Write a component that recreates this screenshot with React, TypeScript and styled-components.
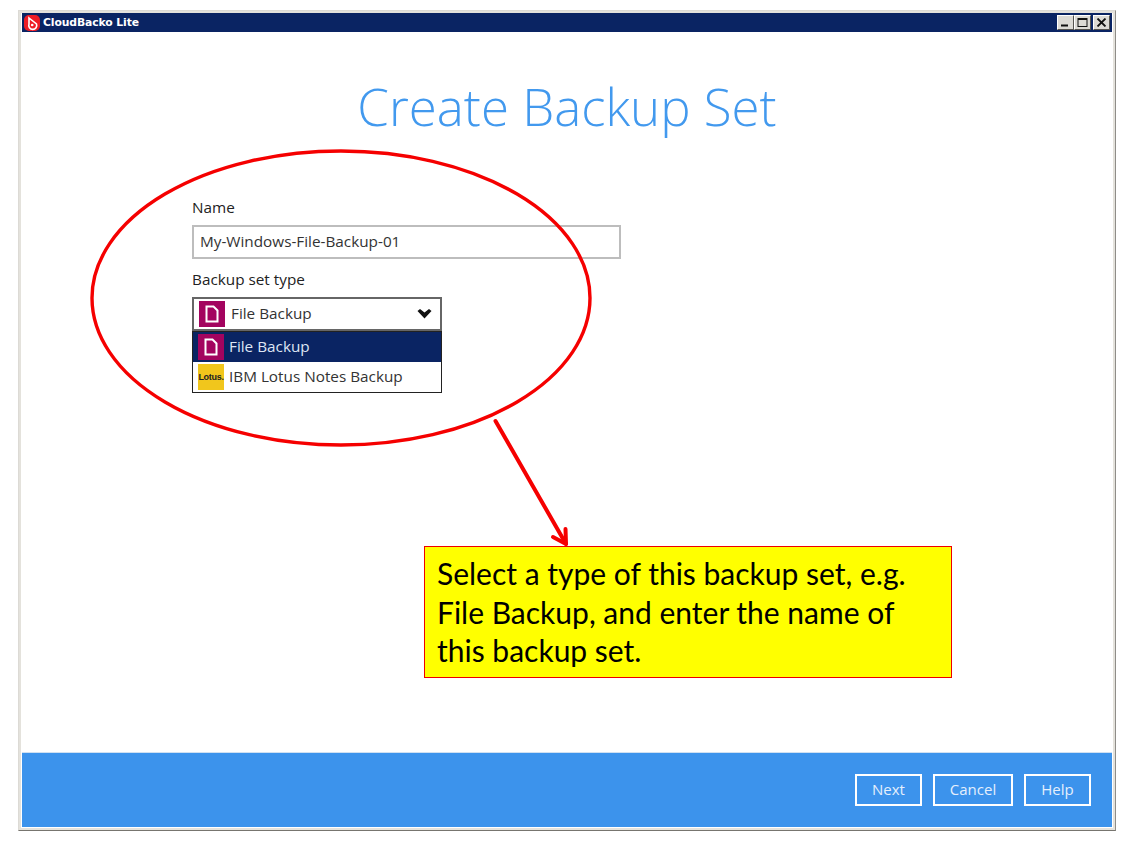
import React from "react";
import styled, { createGlobalStyle } from "styled-components";

const Global = createGlobalStyle`
  html, body { margin: 0; padding: 0; background: #fff; }
  body { font-family: "Open Sans", "Liberation Sans", sans-serif; }
`;

const Page = styled.div`
  position: relative;
  width: 1128px;
  height: 843px;
  padding: 10px 12px 12px 18px;
  box-sizing: border-box;
  overflow: hidden;
`;

const Win = styled.div`
  width: 1098px;
  height: 821px;
  box-sizing: border-box;
  display: flex;
  flex-direction: column;
  background: #fff;
  padding: 2px 3px 3px 3px;
  border: 1px solid;
  border-color: #dcdad5 #8f8d88 #77756f #dcdad5;
  box-shadow: inset 0 0 0 2px #e4e2dc;
`;

const TitleBar = styled.div`
  height: 19px;
  flex: none;
  background: #0a2463;
  display: flex;
  align-items: center;
  padding: 0 2px 0 2px;
  gap: 3px;
`;

const TitleText = styled.span`
  font-family: "DejaVu Sans", sans-serif;
  font-weight: 700;
  font-size: 10.8px;
  color: #fff;
  letter-spacing: -0.1px;
  flex: 1;
`;

const WinButton = styled.button<{ $gap?: boolean }>`
  width: 17px;
  height: 15px;
  padding: 0;
  margin: 0 0 0 ${(p) => (p.$gap ? 2 : 0)}px;
  background: #dcdad5;
  border: 1px solid;
  border-color: #fff #55534f #55534f #fff;
  display: flex;
  align-items: center;
  justify-content: center;
`;

const WinButtons = styled.div`
  display: flex;
`;

const Content = styled.main`
  flex: 1;
  display: flex;
  flex-direction: column;
  min-height: 0;
`;

const Heading = styled.h1`
  margin: 41px 0 0;
  text-align: center;
  font-weight: 300;
  font-size: 51px;
  line-height: 66px;
  color: #4299ee;
`;

const Form = styled.div`
  margin: 58px 0 0 170px;
  display: flex;
  flex-direction: column;
  align-items: flex-start;
`;

const NameLabel = styled.label`
  font-size: 15.3px;
  line-height: 19px;
  padding-top: 1px;
  margin-bottom: -1px;
  color: #222;
`;

const TypeLabel = styled.label`
  font-size: 15.3px;
  line-height: 19px;
  color: #222;
`;

const NameInput = styled.div`
  width: 429px;
  height: 34px;
  margin: 9px 0 11px;
  box-sizing: border-box;
  border: 2px solid #bdbdbd;
  padding: 0 6px;
  font-size: 15.3px;
  line-height: 29px;
  color: #333;
`;

const SelectWrap = styled.div`
  margin-top: 8px;
  width: 250px;
`;

const SelectBox = styled.div`
  height: 34px;
  box-sizing: border-box;
  border: 2px solid #666;
  padding: 0 8px 0 5px;
  display: flex;
  align-items: center;
  gap: 6px;
  font-size: 15.3px;
  color: #333;
`;

const ItemText = styled.span`
  padding-bottom: 3px;
`;

const Chevron = styled.svg`
  margin-left: auto;
  flex: none;
`;

const Dropdown = styled.div`
  border: 1px solid #222;
  box-sizing: border-box;
  height: 62px;
`;

const Option = styled.div<{ $selected?: boolean }>`
  height: 30px;
  display: flex;
  align-items: center;
  gap: 5px;
  padding-left: 5px;
  font-size: 15.3px;
  background: ${(p) => (p.$selected ? "#0a2463" : "#fff")};
  color: ${(p) => (p.$selected ? "#dfe6f4" : "#333")};
`;

const TypeIcon = styled.span`
  width: 26px;
  height: 26px;
  flex: none;
  background: #a3045f;
  display: flex;
  align-items: center;
  justify-content: center;
`;

const LotusIcon = styled.span`
  width: 26px;
  height: 26px;
  flex: none;
  background: #f1c61c;
  color: #222;
  font-family: "Liberation Sans", sans-serif;
  font-weight: 700;
  font-size: 9px;
  letter-spacing: -0.3px;
  display: flex;
  align-items: center;
  justify-content: center;
`;

const Footer = styled.footer`
  height: 75px;
  flex: none;
  margin-top: auto;
  background: #3c93ec;
  border-top: 1px solid #cfe0f2;
  box-sizing: border-box;
  display: flex;
  align-items: center;
  justify-content: flex-end;
  gap: 11px;
  padding: 0 21px 0 0;
`;

const FootButton = styled.button<{ $w: number }>`
  width: ${(p) => p.$w}px;
  height: 32px;
  box-sizing: border-box;
  border: 2px solid #fff;
  background: transparent;
  color: #e4effc;
  font-family: "Open Sans", sans-serif;
  font-size: 15px;
  line-height: 24px;
  padding: 0 0 3px;
`;

const Overlay = styled.svg`
  position: absolute;
  left: 0;
  top: 0;
  pointer-events: none;
`;

const Callout = styled.div`
  position: absolute;
  left: 424px;
  top: 546px;
  width: 528px;
  height: 132px;
  box-sizing: border-box;
  background: #ffff00;
  border: 1px solid #ee0000;
  padding: 7px 12px;
  font-family: "Lato", "Liberation Sans", sans-serif;
  font-size: 30px;
  line-height: 38.5px;
  color: #000;
`;

const FileGlyph = () => (
  <svg width="14" height="18" viewBox="0 0 14 18" fill="none" stroke="#fff" strokeWidth="2">
    <path d="M1.5 1.5 H8.5 L12.5 5.5 V16.5 H1.5 Z" />
  </svg>
);

const Logo = () => (
  <svg width="16" height="16" viewBox="0 0 16 16">
    <rect x="0" y="0" width="16" height="16" rx="5" fill="#ee1c25" />
    <path d="M5 3 L12.5 9 A4 4 0 1 1 5 9 Z" fill="none" stroke="#fff" strokeWidth="1.6" />
    <circle cx="8.2" cy="10" r="1.3" fill="#fff" />
  </svg>
);

export default function App() {
  return (
    <>
      <Global />
      <Page>
        <Win>
          <TitleBar>
            <Logo />
            <TitleText>CloudBacko Lite</TitleText>
            <WinButtons>
              <WinButton aria-label="Minimise">
                <svg width="11" height="9" viewBox="0 0 11 9">
                  <rect x="1" y="6.5" width="7" height="2" fill="#111" />
                </svg>
              </WinButton>
              <WinButton aria-label="Maximise">
                <svg width="11" height="9" viewBox="0 0 11 9" fill="none">
                  <rect x="1" y="0.5" width="9" height="8" stroke="#111" />
                  <rect x="1" y="0" width="9" height="2" fill="#111" />
                </svg>
              </WinButton>
              <WinButton $gap aria-label="Close">
                <svg width="11" height="9" viewBox="0 0 11 9" stroke="#111" strokeWidth="1.8">
                  <path d="M1.5 0.5 L9.5 8.5 M9.5 0.5 L1.5 8.5" />
                </svg>
              </WinButton>
            </WinButtons>
          </TitleBar>
          <Content>
            <Heading>Create Backup Set</Heading>
            <Form>
              <NameLabel>Name</NameLabel>
              <NameInput>My-Windows-File-Backup-01</NameInput>
              <TypeLabel>Backup set type</TypeLabel>
              <SelectWrap>
                <SelectBox>
                  <TypeIcon><FileGlyph /></TypeIcon>
                  <ItemText>File Backup</ItemText>
                  <Chevron width="15" height="10" viewBox="0 0 15 10">
                    <path d="M0.5 2 L3 0 L7.5 3.5 L12 0 L14.5 2 L7.5 9.5 Z" fill="#111" />
                  </Chevron>
                </SelectBox>
                <Dropdown>
                  <Option $selected>
                    <TypeIcon><FileGlyph /></TypeIcon>
                    <ItemText>File Backup</ItemText>
                  </Option>
                  <Option>
                    <LotusIcon>Lotus.</LotusIcon>
                    <ItemText>IBM Lotus Notes Backup</ItemText>
                  </Option>
                </Dropdown>
              </SelectWrap>
            </Form>
            <Footer>
              <FootButton $w={67}>Next</FootButton>
              <FootButton $w={80}>Cancel</FootButton>
              <FootButton $w={67}>Help</FootButton>
            </Footer>
          </Content>
        </Win>
        <Overlay width="1128" height="843" viewBox="0 0 1128 843" fill="none" stroke="#f50000" strokeLinecap="round" strokeLinejoin="round">
          <ellipse cx="341" cy="298" rx="249" ry="147" strokeWidth="3.4" />
          <path d="M495.5 421 L566 544" strokeWidth="4" />
          <path d="M553 537 L566 544 L565.5 529" strokeWidth="4" />
        </Overlay>
        <Callout>Select a type of this backup set, e.g. File Backup, and enter the name of this backup set.</Callout>
      </Page>
    </>
  );
}
